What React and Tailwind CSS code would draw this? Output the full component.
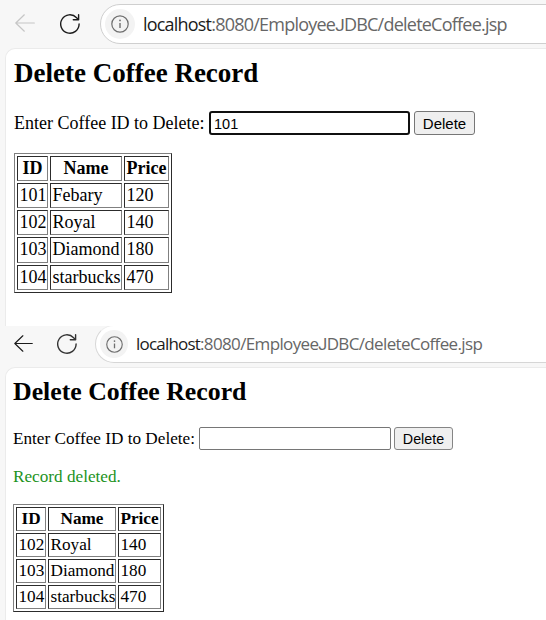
import React from "react";

const serif = "font-['Liberation_Serif','Times_New_Roman',serif]";
const sans = "font-['Liberation_Sans',Arial,sans-serif]";

function BackIcon({ className }) {
  return (
    <svg className={className} viewBox="0 0 20 18" fill="none" stroke="currentColor" strokeWidth="1.2" strokeLinecap="round" strokeLinejoin="round">
      <path d="M19.3 9H.8M9.3.8.8 9l8.500 8.200" />
    </svg>
  );
}

function ReloadIcon({ className }) {
  return (
    <svg className={className} viewBox="0 0 20 20" fill="none" stroke="currentColor" strokeWidth="1.4" strokeLinecap="round" strokeLinejoin="round">
      <path d="M19.1 10A9.200 9.200 0 1 1 16.600 3.700L18.600 5.700M18.600.7v5h-5.300" />
    </svg>
  );
}

function InfoIcon({ className }) {
  return (
    <svg className={className} viewBox="0 0 18 18" fill="none" stroke="#6e6e6e" strokeWidth="1.2">
      <circle cx="9" cy="9" r="8.200" />
      <path d="M9 8v5" strokeWidth="1.4" />
      <circle cx="9" cy="5.400" r=".9" fill="#6e6e6e" stroke="none" />
    </svg>
  );
}

function Address({ className }) {
  return (
    <span className={`whitespace-nowrap font-['Open_Sans','Noto_Sans',sans-serif] text-[#666] ${className}`}>
      <span className="tracking-[-0.8px] text-[#1b1b1b]">localhost</span>:8080/Employee<span className="font-['Roboto',sans-serif] text-[0.95em]">J</span>DBC/deleteCoffee.jsp
    </span>
  );
}

function Cell({ head, className, children }) {
  const Tag = head ? "th" : "td";
  return (
    <Tag className={`flex items-center whitespace-nowrap border border-t-[#2c2c2c] border-l-[#2c2c2c] border-r-[#808080] border-b-[#808080] ${head ? "justify-center font-bold" : "pl-[1.5px] font-normal"} ${className}`}>
      {children}
    </Tag>
  );
}

function CoffeeTable({ rows, columns, heights, className }) {
  return (
    <table className={`block border border-t-[#808080] border-l-[#808080] border-r-[#2c2c2c] border-b-[#2c2c2c] p-[2px] ${className}`}>
      <tbody className="flex flex-col gap-[2px]">
        {[["ID", "Name", "Price"], ...rows].map((row, r) => (
          <tr key={row[0]} className={`flex gap-[2px] ${heights[r]}`}>
            {row.map((value, c) => (
              <Cell key={c} head={r === 0} className={columns[c]}>{value}</Cell>
            ))}
          </tr>
        ))}
      </tbody>
    </table>
  );
}

export default function App() {
  return (
    <div className="h-[620px] w-[546px] overflow-hidden bg-[#f7f7f7] text-black">
      <section className="flex h-[326px] flex-col overflow-hidden">
        <header className="flex h-12 shrink-0 pt-1">
          <BackIcon className="mt-[10px] ml-[15px] h-[18px] w-5 shrink-0 text-[#c6c6c6]" />
          <ReloadIcon className="mt-[10px] ml-[25px] h-5 w-5 shrink-0 text-[#1b1b1b]" />
          <div className="ml-5 flex h-10 w-[480px] shrink-0 items-center rounded-full border border-[#cfcfcf] bg-white pl-1">
            <span className="flex h-[30px] w-[30px] shrink-0 items-center justify-center rounded-full bg-[#f3f3f3]">
              <InfoIcon className="h-[18px] w-[18px]" />
            </span>
            <Address className="ml-2 text-[18px] leading-6 tracking-[-0.77px]" />
          </div>
        </header>
        <main className={`ml-[5px] grow rounded-tl-[10px] border-t border-l border-[#ebebeb] bg-white pl-2 ${serif}`}>
          <h1 className="mt-[9px] text-[27px] leading-[30px] font-bold">Delete Coffee Record</h1>
          <form className="mt-[23px] flex h-6 items-center">
            <label className="w-[195px] whitespace-nowrap pb-px text-[18px] leading-6">Enter Coffee ID to Delete:</label>
            <input readOnly value="101" className={`h-6 w-[201px] rounded-[3px] border-2 border-[#101010] bg-white px-[3px] pt-[2px] text-[14.5px] outline-none ${sans}`} />
            <button type="button" className={`ml-1 h-6 w-[61px] rounded-[3px] border border-[#767676] bg-[#efefef] text-[15px] leading-none ${sans}`}>Delete</button>
          </form>
          <CoffeeTable
            className="mt-[18px] w-[158px] text-[18px] leading-5"
            columns={["w-[31px] pb-[2px]", "w-[72px] pb-[2px]", "w-[45px] pb-[2px]"]}
            heights={["h-[25px]", "h-[25px]", "h-[25px]", "h-[26px]", "h-[25px]"]}
            rows={[["101", "Febary", "120"], ["102", "Royal", "140"], ["103", "Diamond", "180"], ["104", "starbucks", "470"]]}
          />
        </main>
      </section>

      <section className="flex h-[294px] flex-col overflow-hidden">
        <header className="flex h-[41px] shrink-0">
          <BackIcon className="mt-[9px] ml-[14px] h-[17px] w-[19px] shrink-0 text-[#1b1b1b]" />
          <ReloadIcon className="mt-2 ml-6 h-5 w-5 shrink-0 text-[#333]" />
          <div className="-mt-px ml-[18px] flex h-[38px] w-[480px] shrink-0 items-center rounded-full border border-[#d6d6d6] border-t-[#ededed] bg-white pl-1">
            <span className="flex h-7 w-7 shrink-0 items-center justify-center rounded-full bg-[#f3f3f3]">
              <InfoIcon className="h-[17px] w-[17px]" />
            </span>
            <Address className="ml-2 text-[17px] leading-6 tracking-[-0.64px]" />
          </div>
        </header>
        <main className={`ml-[5px] grow rounded-tl-[10px] border-t border-l border-[#ebebeb] bg-white pl-[7px] ${serif}`}>
          <h1 className="mt-[10px] text-[25.8px] leading-[28px] font-bold">Delete Coffee Record</h1>
          <form className="mt-[21px] flex h-[23px] items-center">
            <label className="w-[186px] whitespace-nowrap text-[17.2px] leading-6">Enter Coffee ID to Delete:</label>
            <input readOnly value="" className={`h-[23px] w-[192px] rounded-[2px] border border-[#767676] bg-white px-[3px] text-[14px] outline-none ${sans}`} />
            <button type="button" className={`ml-[3px] h-[23px] w-[59px] rounded-[3px] border border-[#858585] bg-[#efefef] pt-px text-[14.3px] leading-none ${sans}`}>Delete</button>
          </form>
          <p className="mt-[17px] text-[17.2px] leading-5 text-[#1d931d]">Record deleted.</p>
          <CoffeeTable
            className="mt-[17px] w-[151px] text-[17.2px] leading-5"
            columns={["w-[30px]", "w-[68px]", "w-[43px]"]}
            heights={["h-6", "h-6", "h-6", "h-6"]}
            rows={[["102", "Royal", "140"], ["103", "Diamond", "180"], ["104", "starbucks", "470"]]}
          />
        </main>
      </section>
    </div>
  );
}
